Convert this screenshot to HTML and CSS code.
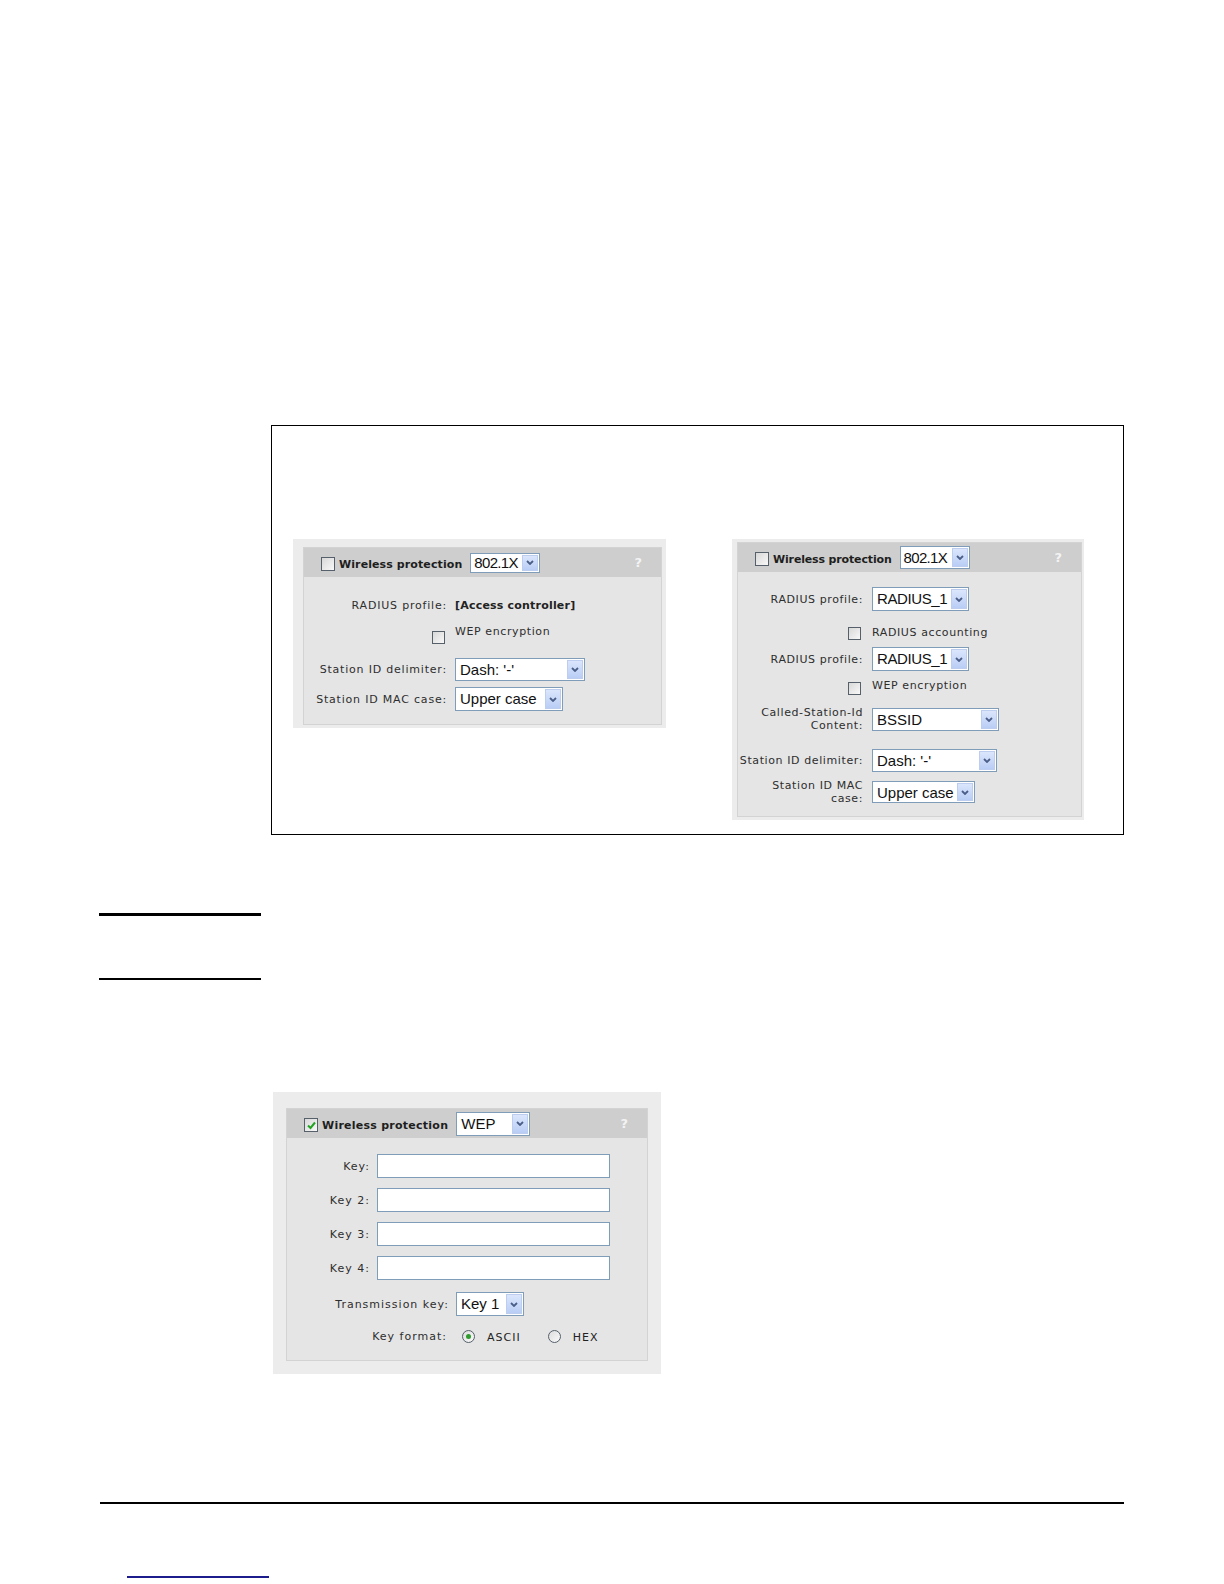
FILE: index.html
```html
<!DOCTYPE html>
<html lang="en">
<head>
  <meta charset="UTF-8">
  <meta name="viewport" content="width=device-width, initial-scale=1">
  <title>Wireless protection</title>
  <link rel="stylesheet" href="styles.css">
</head>
<body>
  <div class="figure">
    <!-- 802.1X, access controller -->
    <div class="shot shot-a">
      <div class="panel">
        <div class="panel-head">
          <span class="check"></span>
          <span class="head-title">Wireless protection</span>
          <span class="select sel-head sel-head-a"><span class="sel-text">802.1X</span><span class="sel-btn"><svg width="8" height="5" viewBox="0 0 8 5"><path d="M1 1 L4 4 L7 1" /></svg></span></span>
          <span class="help">?</span>
        </div>
        <div class="panel-body body-a">
          <div class="row a1"><span class="lbl">RADIUS profile:</span><span class="value">[Access controller]</span></div>
          <div class="row row-check a2"><span class="lbl"><span class="check check-body"></span></span><span class="opt">WEP encryption</span></div>
          <div class="row a3"><span class="lbl">Station ID delimiter:</span><span class="select sel-dash-a"><span class="sel-text">Dash: '-'</span><span class="sel-btn"><svg width="8" height="5" viewBox="0 0 8 5"><path d="M1 1 L4 4 L7 1" /></svg></span></span></div>
          <div class="row a4"><span class="lbl">Station ID MAC case:</span><span class="select sel-upper-a"><span class="sel-text">Upper case</span><span class="sel-btn"><svg width="8" height="5" viewBox="0 0 8 5"><path d="M1 1 L4 4 L7 1" /></svg></span></span></div>
        </div>
      </div>
    </div>

    <!-- 802.1X, RADIUS -->
    <div class="shot shot-b">
      <div class="panel">
        <div class="panel-head">
          <span class="check"></span>
          <span class="head-title">Wireless protection</span>
          <span class="select sel-head sel-head-b"><span class="sel-text">802.1X</span><span class="sel-btn"><svg width="8" height="5" viewBox="0 0 8 5"><path d="M1 1 L4 4 L7 1" /></svg></span></span>
          <span class="help">?</span>
        </div>
        <div class="panel-body body-b">
          <div class="row b1"><span class="lbl">RADIUS profile:</span><span class="select sel-radius"><span class="sel-text">RADIUS_1</span><span class="sel-btn"><svg width="8" height="5" viewBox="0 0 8 5"><path d="M1 1 L4 4 L7 1" /></svg></span></span></div>
          <div class="row row-check b2"><span class="lbl"><span class="check check-body"></span></span><span class="opt">RADIUS accounting</span></div>
          <div class="row b3"><span class="lbl">RADIUS profile:</span><span class="select sel-radius"><span class="sel-text">RADIUS_1</span><span class="sel-btn"><svg width="8" height="5" viewBox="0 0 8 5"><path d="M1 1 L4 4 L7 1" /></svg></span></span></div>
          <div class="row row-check b4"><span class="lbl"><span class="check check-body"></span></span><span class="opt">WEP encryption</span></div>
          <div class="row b5"><span class="lbl">Called-Station-Id<br>Content:</span><span class="select sel-bssid"><span class="sel-text">BSSID</span><span class="sel-btn"><svg width="8" height="5" viewBox="0 0 8 5"><path d="M1 1 L4 4 L7 1" /></svg></span></span></div>
          <div class="row b6"><span class="lbl">Station ID delimiter:</span><span class="select sel-dash-b"><span class="sel-text">Dash: '-'</span><span class="sel-btn"><svg width="8" height="5" viewBox="0 0 8 5"><path d="M1 1 L4 4 L7 1" /></svg></span></span></div>
          <div class="row b7"><span class="lbl">Station ID MAC<br>case:</span><span class="select sel-upper-b"><span class="sel-text">Upper case</span><span class="sel-btn"><svg width="8" height="5" viewBox="0 0 8 5"><path d="M1 1 L4 4 L7 1" /></svg></span></span></div>
        </div>
      </div>
    </div>
  </div>

  <div class="rule rule-top"></div>
  <div class="rule rule-bottom"></div>

  <!-- WEP -->
  <div class="shot shot-c">
    <div class="panel">
      <div class="panel-head">
        <span class="check checked"><svg width="11" height="11" viewBox="0 0 11 11"><path d="M2 5.5 L4.5 8 L9 2.5" /></svg></span>
        <span class="head-title">Wireless protection</span>
        <span class="select sel-wep"><span class="sel-text">WEP</span><span class="sel-btn"><svg width="8" height="5" viewBox="0 0 8 5"><path d="M1 1 L4 4 L7 1" /></svg></span></span>
        <span class="help">?</span>
      </div>
      <div class="panel-body body-c">
        <div class="row c1"><span class="lbl">Key:</span><span class="text-input"></span></div>
        <div class="row c2"><span class="lbl">Key 2:</span><span class="text-input"></span></div>
        <div class="row c2"><span class="lbl">Key 3:</span><span class="text-input"></span></div>
        <div class="row c2"><span class="lbl">Key 4:</span><span class="text-input"></span></div>
        <div class="row c5"><span class="lbl lbl-wide">Transmission key:</span><span class="select sel-key"><span class="sel-text">Key 1</span><span class="sel-btn"><svg width="8" height="5" viewBox="0 0 8 5"><path d="M1 1 L4 4 L7 1" /></svg></span></span></div>
        <div class="row c6">
          <span class="lbl lbl-format">Key format:</span>
          <span class="radio checked"></span><span class="radio-text">ASCII</span>
          <span class="radio radio-hex"></span><span class="radio-text">HEX</span>
        </div>
      </div>
    </div>
  </div>

  <div class="rule rule-footer"></div>
  <div class="footer-link"></div>
</body>
</html>
```

FILE: styles.css
```css
body {
  margin: 0;
  padding-top: 425px;
  background: #fff;
  font-family: "DejaVu Sans", Verdana, sans-serif;
  font-size: 11px;
  color: #2e2e2e;
}

.figure {
  box-sizing: border-box;
  margin-left: 271px;
  width: 853px;
  height: 410px;
  border: 1px solid #000;
  padding: 113px 0 0 21px;
  display: flex;
  align-items: flex-start;
  gap: 66px;
}

/* screenshot frame around each panel */
.shot {
  background: #ececec;
  box-sizing: border-box;
}
.shot-a {
  width: 373px;
  padding: 8px 4px 3px 10px;
}
.shot-b {
  width: 352px;
  padding: 3px 2px 3px 5px;
}
.shot-c {
  width: 388px;
  margin-left: 273px;
  margin-top: 112px;
  padding: 16px 13px 13px 13px;
}

.panel {
  border: 1px solid #d3d3d3;
  background: #e5e5e5;
}

.panel-head {
  height: 29px;
  background: #cecece;
  display: flex;
  align-items: center;
  padding-left: 17px;
  padding-right: 19px;
}
.head-title {
  font-weight: bold;
  color: #1e1e1e;
  margin-left: 4px;
  margin-right: 8px;
  margin-top: 3px;
  letter-spacing: 0.1px;
}
.shot-b .head-title { letter-spacing: -0.15px; }
.shot-c .head-title { letter-spacing: 0.25px; }
.help {
  margin-left: auto;
  font-weight: bold;
  font-size: 13px;
  color: #f3f3f3;
}

.check {
  box-sizing: border-box;
  display: inline-flex;
  align-items: center;
  justify-content: center;
  width: 14px;
  height: 14px;
  border: 1px solid #55606b;
  background: linear-gradient(135deg, #d8d8d8, #f8f8f8);
  margin-top: 3px;
}
.check svg path {
  fill: none;
  stroke: #22a322;
  stroke-width: 2;
}
.check-body {
  width: 13px;
  height: 13px;
  margin: 0 2px 0 0;
}

.select {
  box-sizing: border-box;
  display: inline-flex;
  height: 24px;
  border: 1px solid #7f9db9;
  background: #fff;
  font-family: "Liberation Sans", Arial, sans-serif;
  font-size: 15px;
  color: #111;
}
.sel-text {
  flex: 1;
  padding-left: 4px;
  line-height: 21px;
  white-space: nowrap;
}
.sel-btn {
  flex: none;
  width: 16px;
  margin: 1px;
  box-sizing: border-box;
  border: 1px solid #bccdf0;
  background: linear-gradient(#dbe6fc, #b9cdf5);
  display: flex;
  align-items: center;
  justify-content: center;
}
.sel-btn svg path {
  fill: none;
  stroke: #4a5e88;
  stroke-width: 1.8;
}
.sel-head .sel-text {
  padding-left: 3px;
  letter-spacing: -0.7px;
}
.sel-head-a { width: 70px; height: 20px; }
.sel-head-a .sel-text { line-height: 18px; }
.sel-head-b { width: 70px; height: 23px; }
.sel-wep { width: 74px; }
.sel-dash-a { width: 130px; height: 23px; }
.sel-upper-a { width: 108px; }
.sel-radius { width: 97px; }
.sel-radius .sel-text { letter-spacing: -0.4px; }
.sel-bssid { width: 127px; height: 23px; }
.sel-dash-b { width: 125px; height: 23px; }
.sel-upper-b { width: 103px; height: 22px; }
.sel-key { width: 68px; }

/* body rows */
.row {
  display: flex;
  align-items: center;
}
.lbl {
  flex: none;
  text-align: right;
  line-height: 13px;
  letter-spacing: 0.8px;
  white-space: nowrap;
}
.value {
  font-weight: bold;
  color: #222;
  letter-spacing: 0.2px;
}
.row-check {
  align-items: flex-start;
}
.row-check .lbl {
  display: flex;
  justify-content: flex-end;
}
.opt {
  line-height: 14px;
  letter-spacing: 0.6px;
}

.body-a {
  padding-bottom: 13px;
}
.body-a .row { gap: 8px; }
.body-a .lbl { width: 143px; }
.a1 { margin-top: 18px; height: 20px; }
.a2 { margin-top: 10px; }
.a2 .check { margin-top: 6px; }
.a3 { margin-top: 14px; }
.a4 { margin-top: 6px; }

.body-b {
  padding-bottom: 11px;
}
.body-b .row { gap: 9px; }
.body-b .lbl { width: 125px; letter-spacing: 0.6px; }
.b1 { margin-top: 15px; }
.b2 { margin-top: 15px; }
.b2 .check { margin-top: 1px; }
.b3 { margin-top: 7px; }
.b4 { margin-top: 8px; }
.b4 .check { margin-top: 3px; }
.b5 { margin-top: 11px; }
.b6 { margin-top: 17px; }
.b7 { margin-top: 7px; }

.body-c {
  padding-bottom: 16px;
}
.body-c .row { gap: 7px; }
.body-c .lbl { width: 83px; letter-spacing: 1px; }
.body-c .lbl-wide { width: 162px; }
.body-c .lbl-format { width: 160px; margin-right: 15px; }
.c1 { margin-top: 16px; }
.c2 { margin-top: 10px; }
.c5 { margin-top: 12px; }
.body-c .c6 { margin-top: 13px; gap: 0; }

.text-input {
  box-sizing: border-box;
  width: 233px;
  height: 24px;
  border: 1px solid #7f9db9;
  background: #fff;
}

.radio {
  box-sizing: border-box;
  width: 13px;
  height: 13px;
  border: 1px solid #55606b;
  border-radius: 50%;
  background: linear-gradient(135deg, #dcdcdc, #fafafa);
  display: inline-flex;
  align-items: center;
  justify-content: center;
}
.radio.checked::after {
  content: "";
  width: 5px;
  height: 5px;
  border-radius: 50%;
  background: #2e9b2e;
}
.radio-text {
  margin-left: 12px;
  margin-top: 2px;
  color: #222;
  letter-spacing: 1px;
}
.radio-hex {
  margin-left: 27px;
}

.rule {
  background: #000;
}
.rule-top {
  margin: 78px 0 0 99px;
  width: 162px;
  height: 3px;
}
.rule-bottom {
  margin: 62px 0 0 99px;
  width: 162px;
  height: 2px;
}
.rule-footer {
  margin: 128px 0 0 100px;
  width: 1024px;
  height: 2px;
}
.footer-link {
  margin: 72px 0 0 127px;
  width: 142px;
  height: 2px;
  background: #1c1c8c;
}
```
